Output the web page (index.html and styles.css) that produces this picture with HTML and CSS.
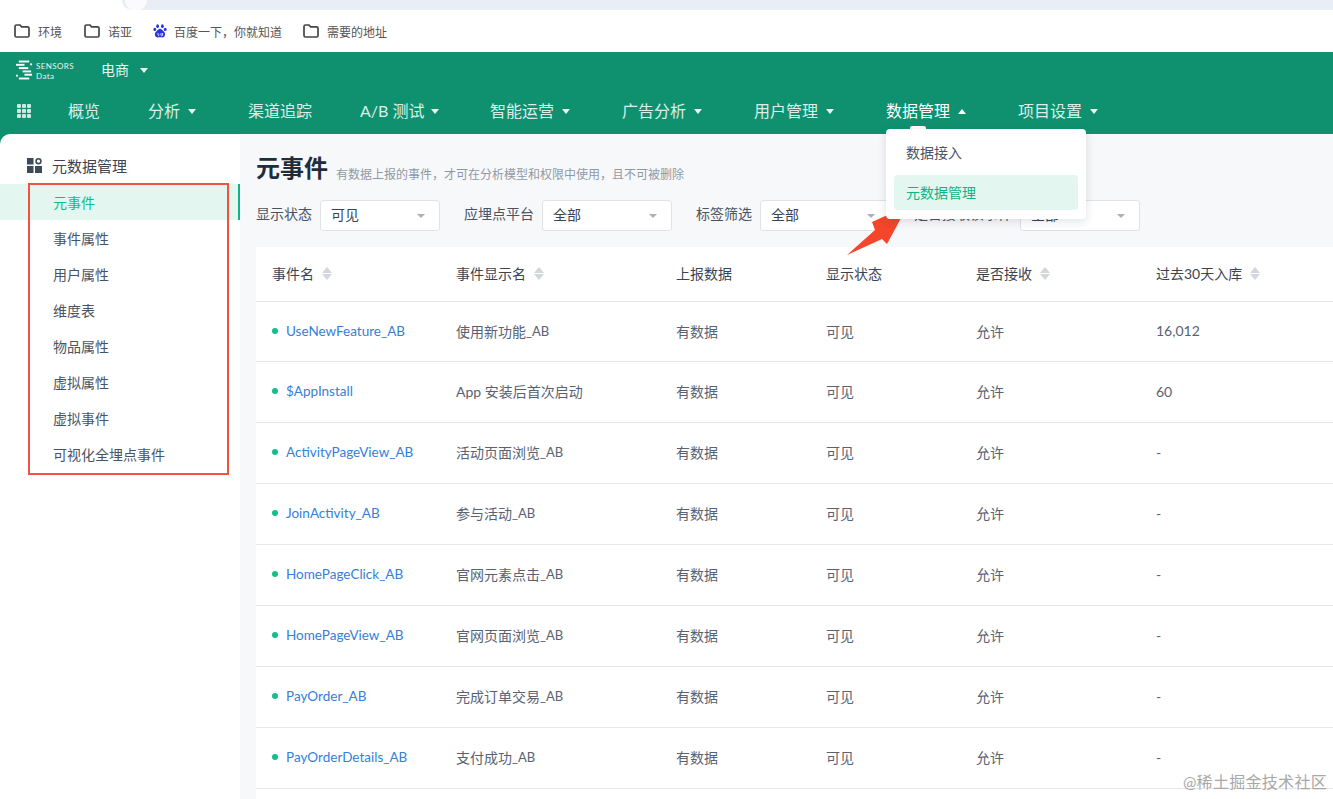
FILE: index.html
```html
<!DOCTYPE html>
<html lang="zh">
<head>
<meta charset="utf-8">
<title>元事件</title>
<link rel="stylesheet" href="styles.css">
</head>
<body>
<div class="chrome"><div class="urlbar"><i class="url-btn"></i></div></div>
<div class="bookmarks">
  <span class="bm bm-a"><svg class="folder" viewBox="0 0 16 14"><path d="M1 2.4 Q1 1 2.4 1 H6 L7.6 2.8 H13.6 Q15 2.8 15 4.2 V11.6 Q15 13 13.6 13 H2.4 Q1 13 1 11.6 Z" fill="none" stroke="#444" stroke-width="1.7"/></svg>环境</span>
  <span class="bm bm-b"><svg class="folder" viewBox="0 0 16 14"><path d="M1 2.4 Q1 1 2.4 1 H6 L7.6 2.8 H13.6 Q15 2.8 15 4.2 V11.6 Q15 13 13.6 13 H2.4 Q1 13 1 11.6 Z" fill="none" stroke="#444" stroke-width="1.7"/></svg>诺亚</span>
  <span class="bm bm-c"><svg class="paw" viewBox="0 0 14 14"><g fill="#2932e1"><ellipse cx="4.6" cy="2.2" rx="1.4" ry="1.9"/><ellipse cx="9.4" cy="2.2" rx="1.4" ry="1.9"/><ellipse cx="1.8" cy="5.4" rx="1.4" ry="1.7"/><ellipse cx="12.2" cy="5.4" rx="1.4" ry="1.7"/><path d="M7 4.8 C5.4 4.8 4.8 6.4 3.2 7.6 C1 9.4 1.8 13.6 4.8 13.4 C6 13.3 8 13.3 9.2 13.4 C12.2 13.6 13 9.4 10.8 7.6 C9.2 6.4 8.6 4.8 7 4.8Z"/></g><path d="M5 9v1.6c0 1.4 1.2 1.4 1.2 0M8 9v2.2c0 1 1.6 1 1.6 0V9" fill="none" stroke="#fff" stroke-width=".8"/></svg>百度一下，你就知道</span>
  <span class="bm"><svg class="folder" viewBox="0 0 16 14"><path d="M1 2.4 Q1 1 2.4 1 H6 L7.6 2.8 H13.6 Q15 2.8 15 4.2 V11.6 Q15 13 13.6 13 H2.4 Q1 13 1 11.6 Z" fill="none" stroke="#444" stroke-width="1.7"/></svg>需要的地址</span>
</div>
<header class="topbar">
  <div class="brand-row">
    <svg class="logo" viewBox="0 0 18 20"><g fill="#fff"><rect x="3" y="0" width="11" height="2"/><rect x="0" y="3.5" width="9" height="2"/><rect x="15" y="3" width="2" height="2"/><rect x="3" y="7" width="10" height="2"/><rect x="7" y="10.5" width="9" height="2"/><rect x="9" y="14" width="8" height="2"/><rect x="0" y="15" width="2" height="2"/><rect x="3" y="18" width="11" height="2"/></g></svg>
    <span class="logo-text">SENSORS<br>Data</span>
    <span class="project">电商</span><i class="caret"></i>
  </div>
  <nav class="nav">
    <svg class="apps" viewBox="0 0 14 14"><g fill="#fff" opacity=".8"><rect width="4" height="4" rx="1"/><rect x="5" width="4" height="4" rx="1"/><rect x="10" width="4" height="4" rx="1"/><rect y="5" width="4" height="4" rx="1"/><rect x="5" y="5" width="4" height="4" rx="1"/><rect x="10" y="5" width="4" height="4" rx="1"/><rect y="10" width="4" height="4" rx="1"/><rect x="5" y="10" width="4" height="4" rx="1"/><rect x="10" y="10" width="4" height="4" rx="1"/></g></svg>
    <span class="nav-item n1">概览</span>
    <span class="nav-item n2">分析<i class="caret"></i></span>
    <span class="nav-item n3">渠道追踪</span>
    <span class="nav-item n4">A/B 测试<i class="caret"></i></span>
    <span class="nav-item n5">智能运营<i class="caret"></i></span>
    <span class="nav-item n6">广告分析<i class="caret"></i></span>
    <span class="nav-item n7">用户管理<i class="caret"></i></span>
    <span class="nav-item n8 open">数据管理<i class="caret up"></i></span>
    <span class="nav-item n9">项目设置<i class="caret"></i></span>
  </nav>
</header>
<div class="main">
  <aside class="side">
    <div class="side-title"><svg class="side-ico" viewBox="0 0 15 15"><g fill="#3c4a5c"><rect width="6.5" height="6.5"/><rect y="8" width="6.5" height="7"/><rect x="8" y="8" width="7" height="7"/><circle cx="11.5" cy="3.2" r="2.4" fill="none" stroke="#3c4a5c" stroke-width="1.6"/></g></svg>元数据管理</div>
    <ul class="side-list">
      <li class="active">元事件</li>
      <li>事件属性</li>
      <li>用户属性</li>
      <li>维度表</li>
      <li>物品属性</li>
      <li>虚拟属性</li>
      <li>虚拟事件</li>
      <li>可视化全埋点事件</li>
    </ul>
  </aside>
  <section class="content">
    <div class="head"><h1>元事件</h1><span class="sub">有数据上报的事件，才可在分析模型和权限中使用，且不可被删除</span></div>
    <div class="filters">
      <label>显示状态</label><span class="sel s1">可见<i class="sel-caret"></i></span>
      <label>应埋点平台</label><span class="sel s2">全部<i class="sel-caret"></i></span>
      <label>标签筛选</label><span class="sel s3">全部<i class="sel-caret"></i></span>
      <label>是否接收该事件</label><span class="sel s4">全部<i class="sel-caret"></i></span>
    </div>
    <div class="table">
      <div class="row thead">
        <span class="c1">事件名<i class="sort"></i></span><span class="c2">事件显示名<i class="sort"></i></span><span class="c3">上报数据</span><span class="c4">显示状态</span><span class="c5">是否接收<i class="sort"></i></span><span class="c6">过去30天入库<i class="sort"></i></span>
      </div>
      <div class="row first"><span class="c1"><i class="dot"></i><a>UseNewFeature_AB</a></span><span class="c2">使用新功能<b class="lat">_AB</b></span><span class="c3">有数据</span><span class="c4">可见</span><span class="c5">允许</span><span class="c6">16,012</span></div>
      <div class="row"><span class="c1"><i class="dot"></i><a>$AppInstall</a></span><span class="c2">App 安装后首次启动</span><span class="c3">有数据</span><span class="c4">可见</span><span class="c5">允许</span><span class="c6">60</span></div>
      <div class="row"><span class="c1"><i class="dot"></i><a>ActivityPageView_AB</a></span><span class="c2">活动页面浏览<b class="lat">_AB</b></span><span class="c3">有数据</span><span class="c4">可见</span><span class="c5">允许</span><span class="c6">-</span></div>
      <div class="row"><span class="c1"><i class="dot"></i><a>JoinActivity_AB</a></span><span class="c2">参与活动<b class="lat">_AB</b></span><span class="c3">有数据</span><span class="c4">可见</span><span class="c5">允许</span><span class="c6">-</span></div>
      <div class="row"><span class="c1"><i class="dot"></i><a>HomePageClick_AB</a></span><span class="c2">官网元素点击<b class="lat">_AB</b></span><span class="c3">有数据</span><span class="c4">可见</span><span class="c5">允许</span><span class="c6">-</span></div>
      <div class="row"><span class="c1"><i class="dot"></i><a>HomePageView_AB</a></span><span class="c2">官网页面浏览<b class="lat">_AB</b></span><span class="c3">有数据</span><span class="c4">可见</span><span class="c5">允许</span><span class="c6">-</span></div>
      <div class="row"><span class="c1"><i class="dot"></i><a>PayOrder_AB</a></span><span class="c2">完成订单交易<b class="lat">_AB</b></span><span class="c3">有数据</span><span class="c4">可见</span><span class="c5">允许</span><span class="c6">-</span></div>
      <div class="row"><span class="c1"><i class="dot"></i><a>PayOrderDetails_AB</a></span><span class="c2">支付成功<b class="lat">_AB</b></span><span class="c3">有数据</span><span class="c4">可见</span><span class="c5">允许</span><span class="c6">-</span></div>
    </div>
  </section>
</div>
<svg class="arrow" viewBox="0 0 60 50"><path d="M1 48 L29 23 L26 15 L59 0 L54 13 L41 37 L36 32 Z" fill="#f5452b"/></svg>
<div class="menu"><div class="menu-item">数据接入</div><div class="menu-item on">元数据管理</div></div>
<div class="redbox"></div>
<div class="watermark">@稀土掘金技术社区</div>
</body>
</html>
```
FILE: styles.css
```css
* { box-sizing: border-box; }
html, body { margin: 0; height: 799px; overflow: hidden; }
body { position: relative; background: #fff; font-family: "Lato", "Noto Sans CJK SC", sans-serif; color: #3a4453; font-size: 14px; }
i { display: inline-block; }

.chrome { height: 10px; background: #fff; overflow: hidden; }
.urlbar { position: relative; height: 10px; margin-left: 122px; background: #e9edf5; border-radius: 0 0 0 14px; }
.url-btn { position: absolute; left: 3px; top: -11px; width: 22px; height: 22px; border-radius: 50%; background: #fbfbfd; }

.bookmarks { height: 42px; display: flex; align-items: center; padding-left: 14px; font-size: 12px; color: #555; background: #fff; }
.bm { display: inline-flex; align-items: center; }
.bm-a { width: 70px; }
.bm-b { width: 69px; }
.bm-c { width: 150px; }
.folder { width: 16px; height: 14px; margin-right: 8px; }
.paw { width: 14px; height: 14px; margin-right: 7px; }

.topbar { height: 82px; background: #0f9170; color: #fff; }
.brand-row { height: 36px; display: flex; align-items: center; padding-left: 16px; }
.logo { width: 17px; height: 20px; }
.logo-text { font-size: 8px; line-height: 10px; margin: 2px 0 0 3px; width: 65px; letter-spacing: .4px; opacity: .9; }
.project { font-size: 14px; line-height: 20px; color: #e6f5f0; }
.caret { width: 0; height: 0; border-left: 4.5px solid transparent; border-right: 4.5px solid transparent; border-top: 5px solid #eaf6f2; margin-left: 8px; }
.brand-row .caret { margin-left: 11px; }
.n4 .caret { margin-left: 6px; }
.caret.up { border-top: 0; border-bottom: 5px solid #fff; }

.nav { height: 46px; display: flex; align-items: center; padding-left: 17px; font-size: 16px; color: #d9efe8; }
.apps { width: 14px; height: 14px; margin-right: 37px; flex: none; }
.nav-item { display: inline-flex; align-items: center; white-space: nowrap; line-height: 22px; }
.n1 { width: 80px; }
.n2 { width: 100px; }
.n3 { width: 112px; }
.n4 { width: 130px; }
.n5 { width: 132px; }
.n6 { width: 132px; }
.n7 { width: 132px; }
.n8 { width: 132px; }
.nav-item.open { color: #fff; position: relative; }
.nav-item.open::after { content: ""; position: absolute; left: 24px; top: 26px; width: 16px; height: 3px; background: #fff; border-radius: 2px 2px 0 0; }

.main { height: 665px; display: flex; background: #fff; border-radius: 10px 0 0 0; box-shadow: -10px -10px 0 0 #0f9170; }
.side { width: 240px; flex: none; padding-top: 20px; }
.side-title { display: flex; align-items: center; height: 22px; padding-left: 27px; font-size: 15px; color: #3a4453; }
.side-ico { width: 15px; height: 15px; margin-right: 10px; }
.side-list { list-style: none; margin: 8px 0 0; padding: 0; }
.side-list li { height: 36px; line-height: 38px; padding-left: 53px; color: #4a5363; }
.side-list li.active { background: #e3f6ef; color: #10bd8a; position: relative; }
.side-list li.active::after { content: ""; position: absolute; right: 0; top: 0; bottom: 0; width: 2px; background: #10b386; }

.content { flex: 1; min-width: 0; display: flex; flex-direction: column; background: #f7f8fa; padding-left: 16px; }
.head { height: 66px; flex: none; display: flex; align-items: flex-end; padding-bottom: 12px; }
.head h1 { margin: 0; font-size: 24px; line-height: 40px; font-weight: 700; color: #1f2d3d; }
.sub { font-size: 12px; color: #8f98a6; margin-left: 8px; line-height: 26px; }

.filters { height: 47px; flex: none; display: flex; align-items: flex-start; }
.filters label { line-height: 27px; color: #4a5363; margin-right: 8px; white-space: nowrap; }
.sel { position: relative; flex: none; height: 31px; line-height: 28px; border: 1px solid #dfe3e8; border-radius: 3px; background: #fff; padding-left: 10px; color: #3a4453; }
.sel-caret { position: absolute; right: 14px; top: 13px; width: 0; height: 0; border-left: 4px solid transparent; border-right: 4px solid transparent; border-top: 4px solid #a9b0ba; }
.s1 { width: 120px; margin-right: 24px; }
.s2 { width: 130px; margin-right: 24px; }
.s3 { width: 130px; margin-right: 24px; }
.s4 { width: 120px; }

.table { flex: 1; background: #fff; }
.row { display: flex; height: 61px; align-items: center; padding-bottom: 2px; border-bottom: 1px solid #e4e6e9; color: #596273; white-space: nowrap; }
.row.thead { height: 55px; color: #3a4453; }
.row.first { height: 60px; }
.row span { display: inline-flex; align-items: center; }
.c1 { width: 200px; padding-left: 16px; flex: none; }
.c2 { width: 220px; flex: none; }
.c3 { width: 150px; flex: none; }
.c4 { width: 150px; flex: none; }
.c5 { width: 180px; flex: none; }
.c6 { flex: 1; }
.dot { width: 6px; height: 6px; border-radius: 50%; background: #10c08c; margin-right: 8px; }
.row a { color: #3580d8; font-size: 13.5px; }
.lat { font-weight: 400; font-size: 13px; }
.sort { position: relative; width: 10px; height: 13px; margin-left: 8px; }
.sort::before, .sort::after { content: ""; position: absolute; left: 0; width: 0; height: 0; border-left: 5px solid transparent; border-right: 5px solid transparent; }
.sort::before { top: 0; border-bottom: 6px solid #d3d6dc; }
.sort::after { bottom: 0; border-top: 6px solid #d3d6dc; }

.arrow { position: absolute; left: 846px; top: 207px; width: 60px; height: 50px; }
.menu { position: absolute; left: 886px; top: 129px; width: 200px; height: 90px; background: #fff; border-radius: 4px; box-shadow: 0 2px 10px rgba(30,50,70,.15); padding: 7px 8px; }
.menu-item { height: 35px; line-height: 35px; padding-left: 12px; margin-bottom: 4px; color: #4a5363; border-radius: 4px; }
.menu-item:first-child { line-height: 33px; }
.menu-item.on { background: #e3f6ef; color: #10b386; }

.redbox { position: absolute; left: 28px; top: 183px; width: 201px; height: 292px; border: 2px solid #f0523f; }
.watermark { position: absolute; right: 6px; bottom: 6px; font-size: 16px; color: #a8a8a8; letter-spacing: .3px; }
```
